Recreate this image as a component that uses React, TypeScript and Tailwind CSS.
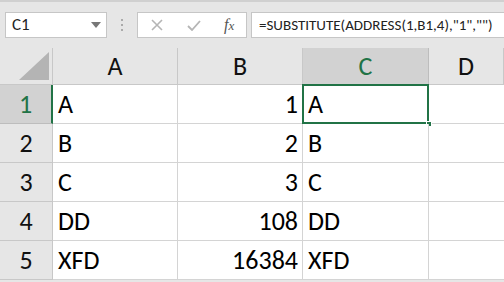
import React from 'react';

const cellFont = { fontFamily: "Carlito, 'Liberation Sans Narrow', 'Liberation Sans', Arial, sans-serif" };

const rows = [
  { n: 1, a: 'A', b: '1', c: 'A' },
  { n: 2, a: 'B', b: '2', c: 'B' },
  { n: 3, a: 'C', b: '3', c: 'C' },
  { n: 4, a: 'DD', b: '108', c: 'DD' },
  { n: 5, a: 'XFD', b: '16384', c: 'XFD' },
];

const cols = ['A', 'B', 'C', 'D'];

const App = () => {
  return (
    <div className="w-[504px] h-[282px] overflow-hidden bg-[#e6e6e6]" style={cellFont}>
      {/* formula bar */}
      <div className="h-[48px] border-t-2 border-[#d0d0d0] flex items-start pt-[10px] pl-[5px]">
        <div className="shrink-0 w-[102px] h-[26px] bg-white border border-[#c6c6c6] flex items-center justify-between pl-[6px] pr-[5px]">
          <span className="text-[17px] text-[#222]">C1</span>
          <svg width="10" height="6" viewBox="0 0 10 6"><path d="M0 0h10L5 6z" fill="#777" /></svg>
        </div>
        <div className="shrink-0 w-[30px] h-[26px] flex flex-col items-center justify-center gap-[3px]">
          <span className="w-[2px] h-[2px] bg-[#aaa]" />
          <span className="w-[2px] h-[2px] bg-[#aaa]" />
          <span className="w-[2px] h-[2px] bg-[#aaa]" />
        </div>
        <div className="shrink-0 w-[110px] h-[26px] bg-white border border-[#c6c6c6] flex items-center">
          <svg className="ml-[13px]" width="12" height="12" viewBox="0 0 12 12"><path d="M1 1l10 10M11 1L1 11" stroke="#b5b5b5" strokeWidth="1.6" /></svg>
          <svg className="ml-[24px]" width="14" height="11" viewBox="0 0 14 11"><path d="M1 6l4 4 8-9" stroke="#b5b5b5" strokeWidth="1.8" fill="none" /></svg>
          <span className="ml-[23px] text-[16px] italic text-[#555]" style={{ fontFamily: "'Liberation Serif', serif" }}>f<span className="text-[13px]">x</span></span>
        </div>
        <div className="ml-[4px] min-w-0 flex-1 h-[26px] bg-white border border-[#c6c6c6] border-r-0 flex items-center pl-[7px] overflow-hidden">
          <span className="text-[15px] text-[#222] whitespace-nowrap">=SUBSTITUTE(ADDRESS(1,B1,4),"1","")</span>
        </div>
      </div>

      {/* sheet */}
      <div className="grid grid-cols-[53px_125px_125px_126px_1fr] grid-rows-[37px_39px_39px_39px_39px_39px]">
        <div className="border-r border-b border-[#c8c8c8] relative">
          <svg className="absolute right-[3px] bottom-[4px]" width="30" height="28" viewBox="0 0 30 28"><path d="M30 0V28H0z" fill="#b4b4b4" /></svg>
        </div>
        {cols.map(c => (
          <div
            key={c}
            className={`flex items-center justify-center text-[26px] border-r border-b ${c === 'C' ? 'bg-[#d2d2d2] text-[#217346] border-r-[#bdbdbd] border-b-[#217346]' : 'text-[#111] border-[#c8c8c8]'}`}
          >
            {c}
          </div>
        ))}
        {rows.map(r => (
          <React.Fragment key={r.n}>
            <div
              className={`flex items-center justify-center text-[26px] border-b border-r ${r.n === 1 ? 'bg-[#d2d2d2] text-[#217346] border-r-2 border-r-[#217346] border-b-[#bdbdbd]' : 'text-[#111] border-[#c8c8c8]'}`}
            >
              {r.n}
            </div>
            <div className="bg-white border-r border-b border-[#d4d4d4] flex items-center pl-[5px] text-[26px] text-black">{r.a}</div>
            <div className="bg-white border-r border-b border-[#d4d4d4] flex items-center justify-end pr-[4px] text-[26px] text-black">{r.b}</div>
            <div className="bg-white border-r border-b border-[#d4d4d4] flex items-center pl-[5px] text-[26px] text-black relative">
              {r.c}
              {r.n === 1 && (
                <>
                  <div className="absolute -left-[1px] -top-[1px] -right-[1px] -bottom-[1px] border-2 border-[#217346]" />
                  <div className="absolute -right-[4px] -bottom-[4px] w-[6px] h-[6px] bg-[#217346] border border-white" />
                </>
              )}
            </div>
            <div className="bg-white border-b border-[#d4d4d4]" />
          </React.Fragment>
        ))}
      </div>
    </div>
  );
};

export default App;
